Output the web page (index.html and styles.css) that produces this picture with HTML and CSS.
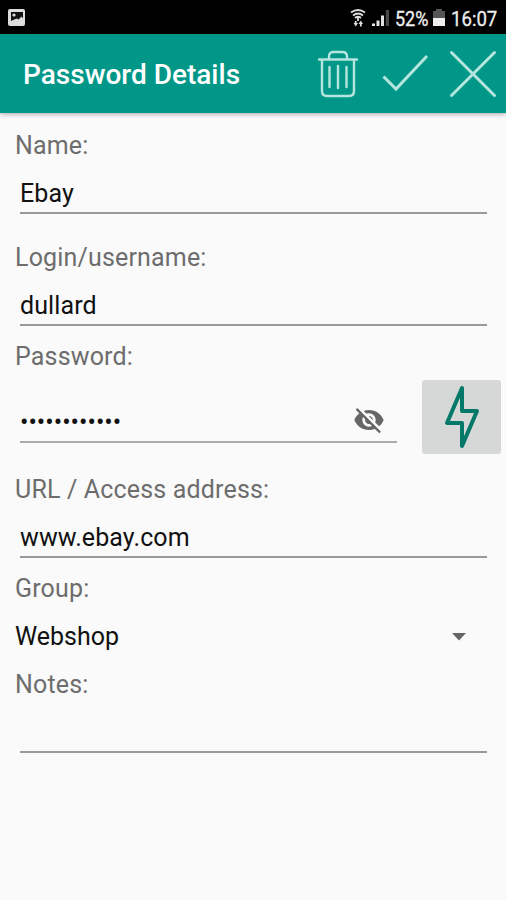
FILE: index.html
```html
<!DOCTYPE html>
<html lang="en">
<head>
<meta charset="utf-8">
<title>Password Details</title>
<link rel="stylesheet" href="styles.css">
</head>
<body>
<div class="status">
  <svg class="picture" width="18" height="18" viewBox="0 0 18 18"><rect width="17" height="17" rx="2" fill="#ddd"/><path d="M3 3h12v6.500l-1.500-2-3 3-2-1L3 12z" fill="#111"/><circle cx="6" cy="6" r="1.600" fill="#ddd"/></svg>
  <svg class="wifi" width="16" height="19" viewBox="0 0 16 19" fill="none" stroke="#ddd" stroke-width="1.800"><path d="M1 3.500Q8-1.500 15 3.500M3 6.500Q8 2.500 13 6.500M5 9Q8 6.500 11 9"/><path d="M8 8v4"/><path d="M3.500 14h1.300v-2h1.800v2H8l-2.200 3.500zM8.500 15l2.300-3.500L13 15h-1.300v2.500H9.900V15z" fill="#ddd" stroke="none"/></svg>
  <svg class="signal" width="18" height="18" viewBox="0 0 18 18" fill="#e2e2e2"><path d="M0 14.500h3V17H0zM4.500 11.500h3V17h-3zM9 6.500h3V17H9z"/><path d="M13.800 1H17v16h-3.200z" fill="#484848"/></svg>
  <span class="percent">52%</span>
  <svg class="battery" width="12" height="18" viewBox="0 0 12 18"><path d="M3 0h6v2h3v7H0V2h3z" fill="#555"/><path d="M0 9h12v8H0z" fill="#eee"/></svg>
  <span class="clock">16:07</span>
</div>
<header class="bar">
  <h1>Password Details</h1>
  <svg class="trash" width="42" height="48" viewBox="0 0 42 48" fill="none" stroke="#b5e5df" stroke-width="2.400" stroke-linecap="round" stroke-linejoin="round"><path d="M2 9.500h38M12 9V6.500Q12 2 16.500 2h9Q30 2 30 6.500V9M5 10v31q0 5 5 5h22q5 0 5-5V10M12.500 17v20M21 16v22M29.500 17v20"/></svg>
  <svg class="check" width="48" height="40" viewBox="0 0 48 40" fill="none" stroke="#b5e5df" stroke-width="3"><path d="M1.500 22.500L14 35 45 2"/></svg>
  <svg class="close" width="48" height="48" viewBox="0 0 48 48" fill="none" stroke="#b5e5df" stroke-width="3" stroke-linecap="round"><path d="M2.500 2.500l43 43M45.500 2.500l-43 43"/></svg>
</header>
<main class="form">
  <div class="label name-label">Name:</div>
  <div class="field">Ebay</div>
  <div class="label login-label">Login/username:</div>
  <div class="field">dullard</div>
  <div class="label password-label">Password:</div>
  <div class="password-row">
    <div class="password-field">
      <span class="dots">••••••••••••</span>
      <svg class="eye" width="32" height="32" viewBox="0 0 24 24" fill="#666"><path d="M12 7c2.760 0 5 2.240 5 5 0 .65-.13 1.260-.36 1.830l2.920 2.920c1.510-1.260 2.700-2.890 3.430-4.750-1.730-4.390-6-7.500-11-7.500-1.400 0-2.740.25-3.980.7l2.160 2.160C10.740 7.130 11.350 7 12 7zM2 4.270l2.280 2.280.46.46C3.080 8.300 1.780 10.020 1 12c1.730 4.390 6 7.500 11 7.500 1.550 0 3.030-.3 4.380-.84l.42.42L19.730 22 21 20.730 3.270 3 2 4.270zM7.530 9.800l1.550 1.550c-.05.21-.08.43-.08.65 0 1.660 1.340 3 3 3 .22 0 .44-.03.65-.08l1.550 1.550c-.67.33-1.410.53-2.200.53-2.760 0-5-2.240-5-5 0-.79.2-1.530.53-2.200zm4.310-.78l3.150 3.150.02-.16c0-1.660-1.340-3-3-3l-.17.01z"/></svg>
    </div>
    <div class="generate"><svg width="36" height="64" viewBox="0 0 36 64" fill="none" stroke="#04796a" stroke-width="4" stroke-linejoin="round"><path d="M18 3L3 38h15v23l15-35H18z"/></svg></div>
  </div>
  <div class="label url-label">URL / Access address:</div>
  <div class="field">www.ebay.com</div>
  <div class="label group-label">Group:</div>
  <div class="select"><span>Webshop</span><svg width="14" height="8" viewBox="0 0 14 8"><path d="M0 0h14L7 7.500z" fill="#666"/></svg></div>
  <div class="label notes-label">Notes:</div>
  <div class="field notes"></div>
</main>
</body>
</html>
```
FILE: styles.css
```css
* { box-sizing: border-box; }
body {
  margin: 0;
  height: 900px;
  background: #fafafa;
  color: #111;
  font: 25px/30px Roboto, sans-serif;
  overflow: hidden;
}
svg { display: block; flex: none; }
.status {
  display: flex;
  height: 34px;
  padding: 9px 8px 0;
  background: #000;
  color: #eee;
  font-size: 20px;
  line-height: 20px;
}
.wifi { margin-left: 324px; }
.signal { margin-left: 6px; }
.percent, .clock { transform-origin: left; white-space: nowrap; -webkit-text-stroke: .3px #eee; }
.percent { width: 33px; margin-left: 5px; transform: scaleX(.9); }
.battery { margin-left: 5px; }
.clock { width: 46px; margin-left: 6px; transform: scaleX(.93); }
.bar {
  display: flex;
  align-items: center;
  height: 79px;
  padding: 0 9px 0 23px;
  background: #009788;
  box-shadow: 0 1px 5px rgba(0, 0, 0, .35);
}
.bar h1 {
  width: 294px;
  margin: 3px 0 0;
  color: #fff;
  font-size: 28px;
  font-weight: 500;
  line-height: 32px;
  white-space: nowrap;
}
.check { margin-left: 23px; }
.close { margin-left: 19px; }
.form { padding: 18px 5px 0 15px; }
.label { height: 30px; color: #6d6d6d; letter-spacing: .17px; white-space: nowrap; }
.field {
  height: 35px;
  margin: 18px 14px 0 5px;
  border-bottom: 2px solid #999;
  letter-spacing: .1px;
}
.login-label { margin-top: 29px; }
.password-label { margin-top: 16px; }
.password-row { display: flex; justify-content: space-between; margin-top: 8px; }
.password-field {
  display: flex;
  align-items: center;
  justify-content: space-between;
  width: 377px;
  height: 63px;
  margin-left: 5px;
  padding: 19px 12px 0 0;
  border-bottom: 2px solid #aaa;
}
.dots { padding-top: 5px; }
.generate {
  display: flex;
  align-items: center;
  justify-content: center;
  width: 79px;
  height: 74px;
  border-radius: 3px;
  background: #d6d8d7;
}
.url-label { margin-top: 21px; }
.group-label { margin-top: 16px; }
.select {
  display: flex;
  align-items: center;
  justify-content: space-between;
  margin-top: 18px;
  padding-right: 35px;
}
.notes-label { margin-top: 18px; }
```
